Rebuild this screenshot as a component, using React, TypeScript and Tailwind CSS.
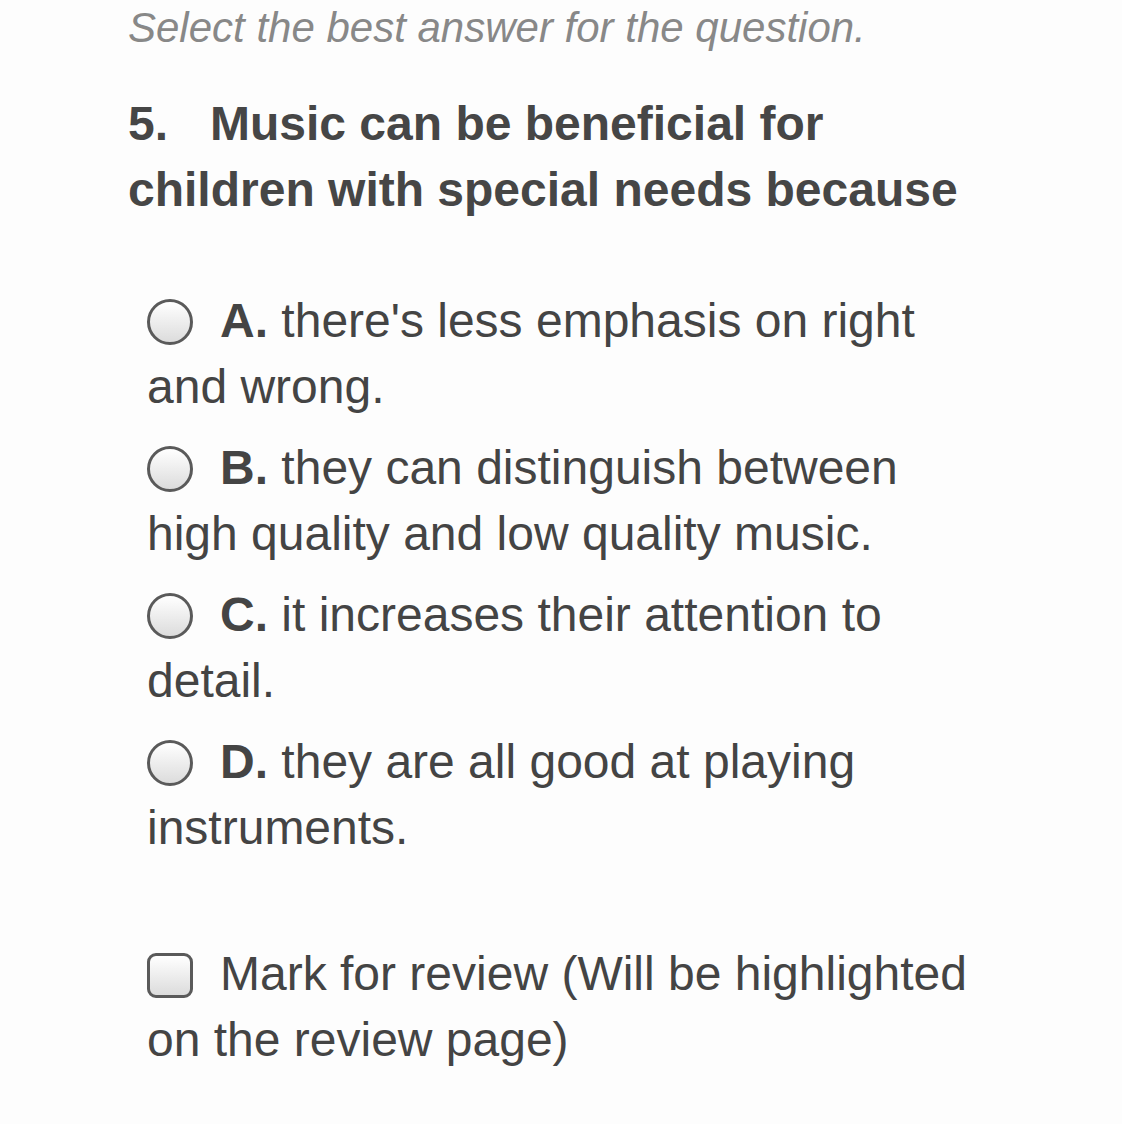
import React from "react";

interface Choice {
  letter: string,
  text: string
}

const choices: Choice[] = [
  { letter: "A.", text: "there's less emphasis on right and wrong." },
  { letter: "B.", text: "they can distinguish between high quality and low quality music." },
  { letter: "C.", text: "it increases their attention to detail." },
  { letter: "D.", text: "they are all good at playing instruments." },
]

function Radio() {
  return (
    <span className="inline-block align-middle w-[46px] h-[46px] rounded-full border-[3px] border-[#5a5a5a] bg-gradient-to-b from-white to-[#dcdcdc] mr-[27px] -mt-[4px]"></span>
  )
}

function Checkbox() {
  return (
    <span className="inline-block align-middle w-[46px] h-[45px] rounded-[9px] border-[3px] border-[#5a5a5a] bg-gradient-to-b from-white to-[#dcdcdc] mr-[27px] -mt-[4px]"></span>
  )
}

export default function App() {
  return (
    <div className="min-h-[1124px] bg-[#fdfdfd] text-[#444444]" style={{ fontFamily: '"Liberation Sans", Arial, sans-serif' }}>
      <div className="pl-[128px] w-[985px]">
        <p className="italic text-[#888888] text-[42px] leading-[56px]">Select the best answer for the question.</p>

        <h2 className="mt-[35px] font-bold text-[48px] leading-[66px] text-[#464646]">
          <span className="inline-block w-[82px]">5.</span>Music can be beneficial for children with special needs because
        </h2>

        <div className="mt-[65px] pl-[19px] flex flex-col gap-[15px]">
          {choices.map((c) => (
            <div key={c.letter} className="text-[48px] leading-[66px]">
              <Radio />
              <b className="font-bold">{c.letter}</b> {c.text}
            </div>
          ))}
        </div>

        <div className="mt-[80px] pl-[19px] text-[48px] leading-[66px]">
          <Checkbox />Mark for review (Will be highlighted on the review page)
        </div>
      </div>
    </div>
  )
}
